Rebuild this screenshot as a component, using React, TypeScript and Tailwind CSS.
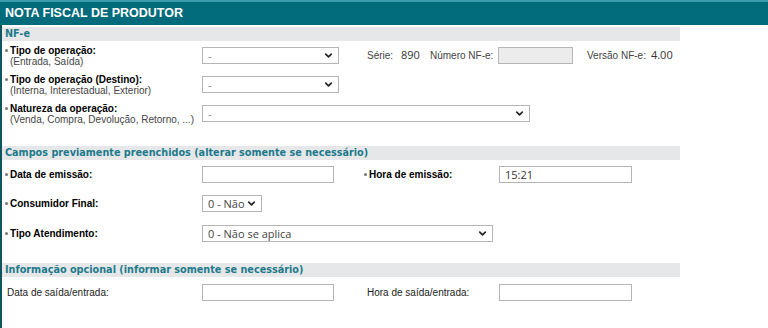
import { ChevronDown } from "lucide-react";

const arial = "font-['Liberation_Sans',Arial,sans-serif]";
const verdana = "font-['DejaVu_Sans_Condensed','DejaVu_Sans',Verdana,sans-serif]";
const plain = "font-['Open_Sans','DejaVu_Sans',sans-serif]";

function Select({ value, width, light }: { value: string; width: string; light?: boolean }) {
  return (
    <div
      className={`flex h-[17px] items-center justify-between border border-[#b5b5b5] bg-white pl-[5px] pr-[4px] ${width}`}
    >
      <span className={`${plain} whitespace-nowrap text-[11px] leading-none ${light ? "text-[#888]" : "text-[#444]"}`}>
        {value}
      </span>
      <ChevronDown className="h-[11px] w-[11px] shrink-0 text-[#222]" strokeWidth={3.5} />
    </div>
  );
}

function Input({ value, width, gray }: { value?: string; width: string; gray?: boolean }) {
  return (
    <div
      className={`flex h-[17px] items-center border border-[#b5b5b5] pl-[5px] ${width} ${gray ? "bg-[#ececec]" : "bg-white"}`}
    >
      <span className={`${plain} text-[11px] leading-none text-[#333]`}>{value}</span>
    </div>
  );
}

function Label({ title, hint, width = "w-[200px]" }: { title: string; hint?: string; width?: string }) {
  return (
    <div className={`${arial} ${width} shrink-0 whitespace-nowrap pl-[3px] leading-[11px]`}>
      <div className="flex items-center gap-[2px] text-[10px] font-bold text-black">
        <span className="h-[3px] w-[3px] rounded-full bg-[#777]" />
        <span>{title}</span>
      </div>
      {hint && <div className="pl-[5px] text-[10px] text-[#444]">{hint}</div>}
    </div>
  );
}

function Section({ title }: { title: string }) {
  return (
    <div className="mr-[88px] flex h-[14px] items-center bg-[#e6e7e9] pl-[3px]">
      <span className={`${verdana} whitespace-nowrap text-[10.75px] font-bold leading-none text-[#1d7a8b]`}>
        {title}
      </span>
    </div>
  );
}

export default function App() {
  return (
    <div className="h-[328px] w-[768px] overflow-hidden bg-white">
      <div className="flex h-[25px] items-center border-t-2 border-[#3a9cac] bg-[#026b7c] pl-[5px]">
        <h1 className={`${arial} text-[12.5px] font-bold text-white`}>NOTA FISCAL DE PRODUTOR</h1>
      </div>
      <div className="h-[303px] border-l-2 border-[#0f5561] pt-[2px]">
        <Section title="NF-e" />

        <div className="mt-[6px] flex h-[17px] items-center">
          <Label title="Tipo de operação:" hint="(Entrada, Saída)" />
          <Select value="-" width="w-[137px]" light />
          <div className={`${arial} ml-[28px] flex items-center whitespace-nowrap text-[10px] text-[#444]`}>
            <span className="w-[34px]">Série:</span>
            <span className={`${plain} w-[29px] text-[11px] text-[#333]`}>890</span>
            <span className="w-[68px]">Número NF-e:</span>
            <Input width="w-[75px]" gray />
            <span className="ml-[14px]">Versão NF-e:</span>
            <span className={`${plain} ml-[5px] text-[11px] text-[#333]`}>4.00</span>
          </div>
        </div>

        <div className="mt-[12px] flex h-[17px] items-center">
          <Label title="Tipo de operação (Destino):" hint="(Interna, Interestadual, Exterior)" />
          <Select value="-" width="w-[137px]" light />
        </div>

        <div className="mt-[12px] flex h-[17px] items-center">
          <Label title="Natureza da operação:" hint="(Venda, Compra, Devolução, Retorno, ...)" />
          <Select value="-" width="w-[328px]" light />
        </div>

        <div className="mt-[24px]">
          <Section title="Campos previamente preenchidos (alterar somente se necessário)" />
        </div>

        <div className="mt-[6px] flex h-[17px] items-center">
          <Label title="Data de emissão:" />
          <Input width="w-[132px]" />
          <Label title="Hora de emissão:" width="w-[165px] pl-[30px]" />
          <Input value="15:21" width="w-[133px]" />
        </div>

        <div className="mt-[12px] flex h-[17px] items-center">
          <Label title="Consumidor Final:" />
          <Select value="0 - Não" width="w-[60px]" />
        </div>

        <div className="mt-[13px] flex h-[17px] items-center">
          <Label title="Tipo Atendimento:" />
          <Select value="0 - Não se aplica" width="w-[291px]" />
        </div>

        <div className="mt-[21px]">
          <Section title="Informação opcional (informar somente se necessário)" />
        </div>

        <div className="mt-[7px] flex h-[17px] items-center">
          <div className={`${arial} w-[200px] shrink-0 pl-[5px] text-[10px] text-[#222]`}>
            Data de saída/entrada:
          </div>
          <Input width="w-[132px]" />
          <div className={`${arial} w-[165px] pl-[33px] text-[10px] text-[#222]`}>
            Hora de saída/entrada:
          </div>
          <Input width="w-[133px]" />
        </div>
      </div>
    </div>
  );
}
